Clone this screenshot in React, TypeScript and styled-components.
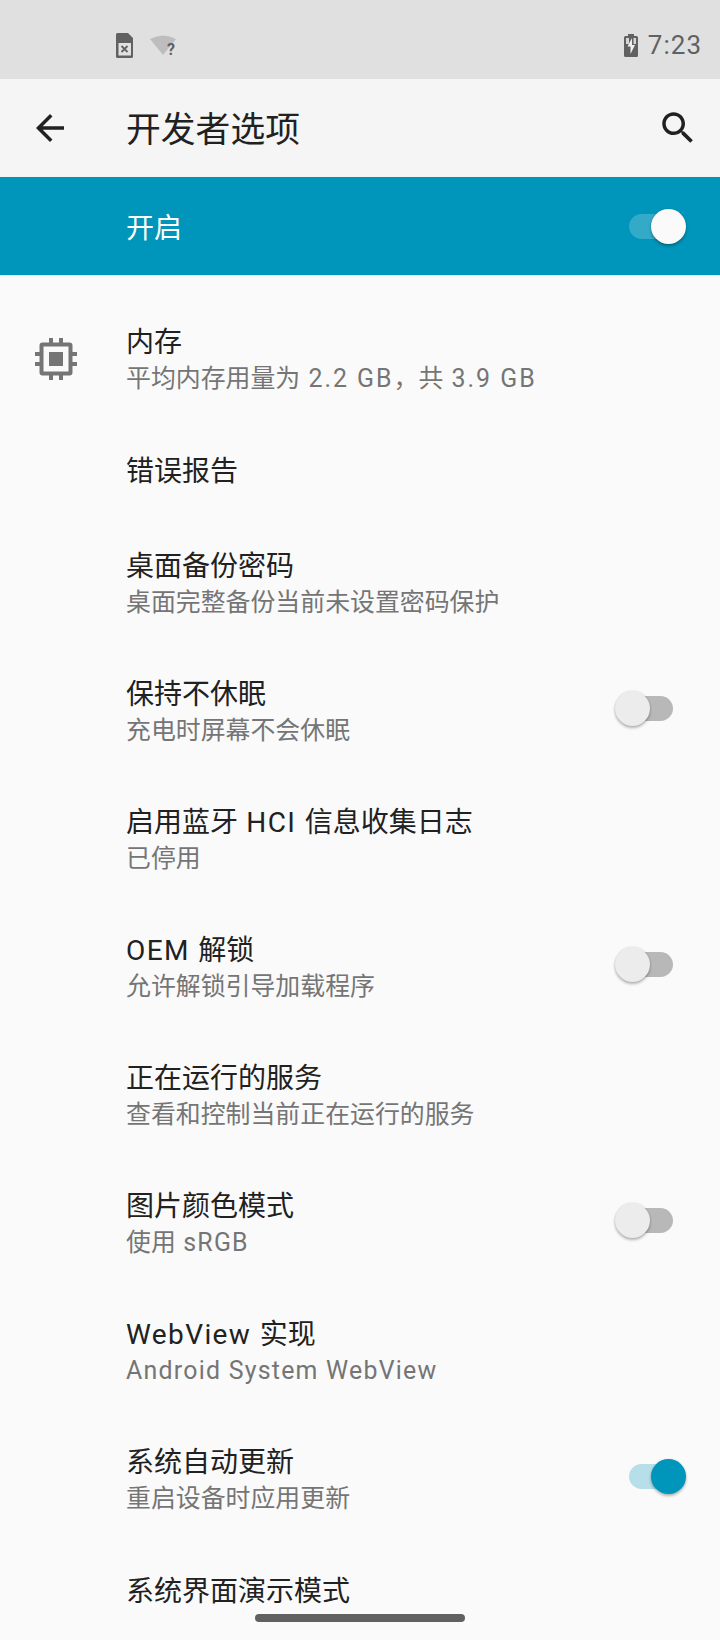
import styled, { createGlobalStyle } from "styled-components";

const GlobalStyle = createGlobalStyle`
  html, body {
    margin: 0;
    padding: 0;
    background: #fafafa;
  }
`;

const Screen = styled.div`
  position: relative;
  width: 720px;
  height: 1640px;
  overflow: hidden;
  background: #fafafa;
  font-family: Roboto, "Noto Sans CJK SC", sans-serif;
`;

const StatusBar = styled.div`
  height: 79px;
  background: #e0e0e0;
  display: flex;
  align-items: center;
  padding: 11px 18px 0 116px;
  box-sizing: border-box;
`;

const StatusLeft = styled.div`
  display: flex;
  align-items: center;
  gap: 17px;
  flex: 1;
`;

const Clock = styled.span`
  font-size: 26px;
  letter-spacing: 1px;
  color: #616161;
  margin-left: 10px;
`;

const Toolbar = styled.div`
  height: 98px;
  background: #f5f5f5;
  display: flex;
  align-items: center;
  padding: 0 21px 0 29px;
`;

const ToolbarTitle = styled.div`
  flex: 1;
  margin-left: 55px;
  padding-bottom: 3px;
  font-size: 34.8px;
  color: #212121;
`;

const MasterBar = styled.div`
  height: 98px;
  background: #0095ba;
  display: flex;
  align-items: center;
  justify-content: space-between;
  padding: 0 47px 0 126px;
  font-size: 28px;
  color: #ffffff;
  box-shadow: 0 1px 2px rgba(0, 0, 0, 0.08);
`;

const List = styled.div`
  padding-top: 21px;
`;

const Row = styled.div<{ $single?: boolean }>`
  height: ${(p) => (p.$single ? 96 : 128)}px;
  box-sizing: border-box;
  display: flex;
  align-items: center;
  padding: 0 47px 0 35px;
`;

const IconSlot = styled.div`
  width: 91px;
  flex-shrink: 0;
  display: flex;
  align-items: center;
  margin-bottom: 2px;
`;

const RowText = styled.div`
  flex: 1;
  display: flex;
  flex-direction: column;
  gap: 1px;
`;

const Title = styled.div`
  font-size: 28px;
  line-height: 36px;
  color: #212121;
`;

const Summary = styled.div`
  font-size: 24.9px;
  line-height: 34px;
  color: #757575;
`;

const Latin = styled.span<{ $digits?: boolean }>`
  letter-spacing: ${(p) => (p.$digits ? "0.08em" : "0.05em")};
`;

const RowToggle = styled.div`
  margin-bottom: 8px;
`;

const Track = styled.div<{ $on?: boolean; $light?: boolean }>`
  position: relative;
  width: 44px;
  height: 25px;
  border-radius: 13px;
  background: ${(p) =>
    p.$light ? "rgba(255, 255, 255, 0.2)" : p.$on ? "#b6dfe9" : "#b8b8b8"};
`;

const Thumb = styled.div<{ $on?: boolean; $light?: boolean }>`
  position: absolute;
  top: -5px;
  ${(p) => (p.$on ? "right: -13px;" : "left: -14px;")}
  width: 35px;
  height: 35px;
  border-radius: 50%;
  background: ${(p) => (p.$light ? "#fafafa" : p.$on ? "#0095ba" : "#ececec")};
  box-shadow: 0 2px 3px rgba(0, 0, 0, 0.28), 0 0 2px rgba(0, 0, 0, 0.12);
`;

const NavHandle = styled.div`
  position: absolute;
  left: 255px;
  top: 1614px;
  width: 210px;
  height: 8px;
  border-radius: 4px;
  background: #616161;
`;

type Item = {
  title: string;
  summary?: string;
  toggle?: "on" | "off";
  icon?: boolean;
};

const items: Item[] = [
  { title: "内存", summary: "平均内存用量为 2.2 GB，共 3.9 GB", icon: true },
  { title: "错误报告" },
  { title: "桌面备份密码", summary: "桌面完整备份当前未设置密码保护" },
  { title: "保持不休眠", summary: "充电时屏幕不会休眠", toggle: "off" },
  { title: "启用蓝牙 HCI 信息收集日志", summary: "已停用" },
  { title: "OEM 解锁", summary: "允许解锁引导加载程序", toggle: "off" },
  { title: "正在运行的服务", summary: "查看和控制当前正在运行的服务" },
  { title: "图片颜色模式", summary: "使用 sRGB", toggle: "off" },
  { title: "WebView 实现", summary: "Android System WebView" },
  { title: "系统自动更新", summary: "重启设备时应用更新", toggle: "on" },
  { title: "系统界面演示模式" },
];

// latin runs are spaced wider than the cjk ones on the device
function spaced(text: string) {
  return text.split(/([A-Za-z0-9. ]+)/).map((part, i) =>
    i % 2 ? (
      <Latin key={i} $digits={/\d/.test(part)}>
        {part}
      </Latin>
    ) : (
      part
    )
  );
}

function SimIcon() {
  return (
    <svg width="17" height="25" viewBox="0 0 17 25">
      <path
        fill="#616161"
        fillRule="evenodd"
        d="M1.500 0H12l5 5v18.500a1.500 1.500 0 0 1-1.500 1.500h-14A1.500 1.500 0 0 1 0 23.500V1.500A1.500 1.500 0 0 1 1.500 0zM2.500 10v12.500h12.500V10z"
      />
      <path stroke="#616161" strokeWidth="1.8" d="M5.500 13l6 6M11.500 13l-6 6" />
    </svg>
  );
}

function WifiIcon() {
  return (
    <svg width="28" height="30" viewBox="0 -3 28 30">
      <path fill="#bdbdbd" d="M0 6Q13-1 26 6L13 22z" />
      <text x="17" y="22" fontFamily="Roboto" fontWeight="700" fontSize="16" fill="#616161">
        ?
      </text>
    </svg>
  );
}

function BatteryIcon() {
  return (
    <svg width="14" height="23" viewBox="0 0 14 23">
      <path
        fill="#616161"
        d="M4 0h6v2h2.500A1.500 1.500 0 0 1 14 3.500v18a1.500 1.500 0 0 1-1.500 1.500h-11A1.500 1.500 0 0 1 0 21.500v-18A1.500 1.500 0 0 1 1.500 2H4z"
      />
      <path fill="#d6d6d6" d="M2 4h3v6H2zM9.500 4H12v6H9.500z" />
      <path fill="#f0f0f0" d="M8 4L3.500 12.500h3V20l4.500-9H8z" />
    </svg>
  );
}

function BackIcon() {
  return (
    <svg width="42" height="42" viewBox="0 0 24 24" fill="#212121">
      <path d="M20 11H7.830l5.590-5.590L12 4l-8 8 8 8 1.410-1.410L7.830 13H20v-2z" />
    </svg>
  );
}

function SearchIcon() {
  return (
    <svg width="42" height="42" viewBox="0 0 24 24" fill="#212121">
      <path d="M15.500 14h-.79l-.28-.27C15.410 12.590 16 11.110 16 9.500 16 5.910 13.090 3 9.500 3S3 5.910 3 9.500 5.910 16 9.500 16c1.610 0 3.090-.59 4.230-1.570l.27.280v.79l5 4.990L20.490 19l-4.990-5zm-6 0C7.010 14 5 11.990 5 9.500S7.010 5 9.500 5 14 7.010 14 9.500 11.990 14 9.500 14z" />
    </svg>
  );
}

function ChipIcon() {
  return (
    <svg width="42" height="42" viewBox="0 0 42 42" fill="#757575">
      <path
        fillRule="evenodd"
        d="M14 0h4v4.500h6V0h4v4.500h6.500a3 3 0 0 1 3 3V14H42v4h-4.500v6H42v4h-4.500v6.500a3 3 0 0 1-3 3H28V42h-4v-4.500h-6V42h-4v-4.500H7.500a3 3 0 0 1-3-3V28H0v-4h4.500v-6H0v-4h4.500V7.500a3 3 0 0 1 3-3H14zM8.500 8.500v25h25v-25z"
      />
      <rect x="14" y="14" width="14" height="14" />
    </svg>
  );
}

function Toggle({ on, light }: { on?: boolean; light?: boolean }) {
  return (
    <Track $on={on} $light={light}>
      <Thumb $on={on} $light={light} />
    </Track>
  );
}

export default function App() {
  return (
    <Screen>
      <GlobalStyle />
      <StatusBar>
        <StatusLeft>
          <SimIcon />
          <WifiIcon />
        </StatusLeft>
        <BatteryIcon />
        <Clock>7:23</Clock>
      </StatusBar>
      <Toolbar>
        <BackIcon />
        <ToolbarTitle>开发者选项</ToolbarTitle>
        <SearchIcon />
      </Toolbar>
      <MasterBar>
        开启
        <Toggle on light />
      </MasterBar>
      <List>
        {items.map((item) => (
          <Row key={item.title} $single={!item.summary}>
            <IconSlot>{item.icon && <ChipIcon />}</IconSlot>
            <RowText>
              <Title>{spaced(item.title)}</Title>
              {item.summary && <Summary>{spaced(item.summary)}</Summary>}
            </RowText>
            {item.toggle && (
              <RowToggle>
                <Toggle on={item.toggle === "on"} />
              </RowToggle>
            )}
          </Row>
        ))}
      </List>
      <NavHandle />
    </Screen>
  );
}
